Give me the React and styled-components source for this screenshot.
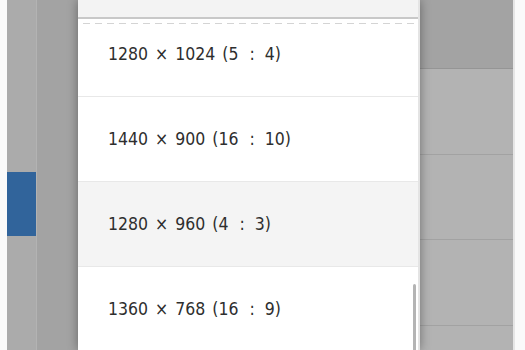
import React from "react";
import styled, { createGlobalStyle } from "styled-components";

const Global = createGlobalStyle`
  html, body { margin: 0; padding: 0; width: 525px; height: 350px; overflow: hidden; background: #fafafa; }
  * { box-sizing: border-box; }
`;

const Screen = styled.div`
  display: grid;
  grid-template-columns: 7px 30px 41px 342px 93px 12px;
  height: 350px;
  width: 525px;
  overflow: hidden;
  font-family: "DejaVu Sans Condensed", "DejaVu Sans", sans-serif;
`;

const Margin = styled.div`
  background: #fafafa;
`;

const Sidebar = styled.div`
  background: #ababab;
  border-right: 1px solid #b3b3b3;
  display: flex;
  flex-direction: column;
  padding-top: 172px;
`;

const SideTab = styled.div`
  height: 64px;
  background: ${(p) => (p.$active ? "#31649b" : "transparent")};
`;

const Gutter = styled.div`
  background: #a3a3a3;
`;

const Dropdown = styled.div`
  position: relative;
  z-index: 1;
  display: flex;
  flex-direction: column;
  background: #fff;
  border-right: 2px solid #e4e4e4;
  box-shadow: 0 0 10px rgba(0, 0, 0, 0.38);
  overflow: hidden;
`;

const DropHeader = styled.div`
  position: relative;
  z-index: 2;
  height: 19px;
  flex: none;
  background: #f3f3f3;
  border-bottom: 2px solid #c8c8c8;
  &::after {
    content: "";
    position: absolute;
    left: 0;
    right: 0;
    top: 23px;
    height: 1px;
    background-size: 12px 1px;
    background-image: linear-gradient(90deg, transparent 0 5px, #d4d4d4 5px 12px);
  }
`;

const Viewport = styled.div`
  position: relative;
  flex: 1;
  overflow: hidden;
`;

const OptionList = styled.ul`
  list-style: none;
  margin: 0;
  padding: 0;
`;

const Option = styled.li`
  height: 85px;
  display: flex;
  align-items: center;
  padding-left: 30px;
  background: ${(p) => (p.$hover ? "#f4f4f4" : "#fff")};
  border-bottom: 1px solid #e8e8e8;
  color: #2e2e2e;
  font-size: 17.5px;
  word-spacing: 2px;
  white-space: pre;
`;

const Colon = styled.span`
  margin: 0 3px 0 4px;
`;

const ScrollThumb = styled.div`
  position: absolute;
  right: 2px;
  top: 265px;
  width: 3px;
  height: 120px;
  border-radius: 2px;
  background: #b4b4b4;
`;

const RightPanel = styled.div`
  display: flex;
  flex-direction: column;
  background: #b3b3b3;
`;

const PanelHead = styled.div`
  height: 69px;
  flex: none;
  background: #a3a3a3;
  border-bottom: 1px solid #959595;
`;

const PanelRow = styled.div`
  height: 85.5px;
  flex: none;
  border-bottom: 1px solid #a2a2a2;
`;

const Edge = styled.div`
  background: #fafafa;
  border-left: 2px solid #e6e6e6;
`;

const options = [
  { w: 1280, h: 1024, a: 5, b: 4 },
  { w: 1440, h: 900, a: 16, b: 10 },
  { w: 1280, h: 960, a: 4, b: 3 },
  { w: 1360, h: 768, a: 16, b: 9 },
];

const scrollOffset = 7;

export default function App() {
  return (
    <>
      <Global />
      <Screen>
        <Margin />
        <Sidebar>
          <SideTab $active />
        </Sidebar>
        <Gutter />
        <Dropdown>
          <DropHeader />
          <Viewport>
            <OptionList style={{ marginTop: -scrollOffset }}>
              {options.map((o, i) => (
                <Option key={`${o.w}x${o.h}`} $hover={i === 2}>
                  {`${o.w} × ${o.h} (${o.a} `}
                  <Colon>:</Colon>
                  {` ${o.b})`}
                </Option>
              ))}
            </OptionList>
            <ScrollThumb />
          </Viewport>
        </Dropdown>
        <RightPanel>
          <PanelHead />
          <PanelRow />
          <PanelRow />
          <PanelRow />
        </RightPanel>
        <Edge />
      </Screen>
    </>
  );
}
